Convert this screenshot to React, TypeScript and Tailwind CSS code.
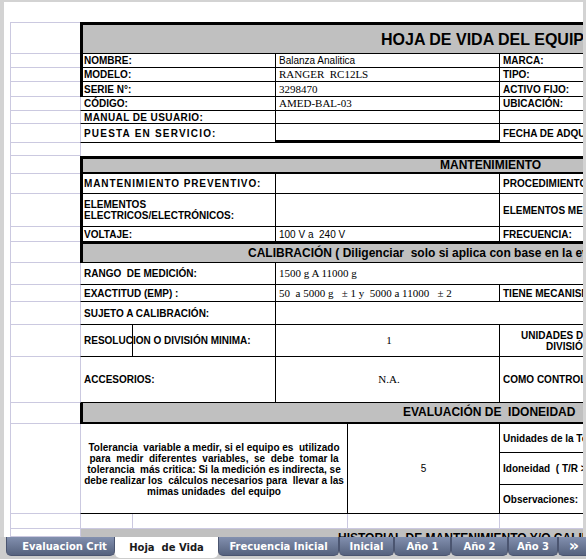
import React from 'react';

// hoja de vida del equipo, vista de hoja de cálculo

type Kids = { children?: React.ReactNode };

const Row = ({ h, top, children }: Kids & { h: string; top?: boolean }) => (
    <div className={`flex ${h}`}>
        <div className="w-[6px] shrink-0" />
        <div className={`w-[70px] shrink-0 border-b border-l border-[#cbc9e0] ${top ? 'border-t' : ''}`} />
        <div className="flex min-w-0 flex-1">{children}</div>
    </div>
);

const L = ({ thick, size, children }: Kids & { thick?: boolean; size?: string }) => (
    <div
        className={`${
            thick
                ? 'flex w-[196px] shrink-0 items-center overflow-hidden whitespace-pre border-b border-l-[3px] border-r border-black pl-[1px] font-bold'
                : 'flex w-[196px] shrink-0 items-center overflow-hidden whitespace-pre border-b border-l border-r border-black border-l-[#cbc9e0] pl-[3px] font-bold'
        } ${size ?? ''}`}
    >
        {children}
    </div>
);

const V = ({ serif, center, wide, thickBottom, children }: Kids & { serif?: boolean; center?: boolean; wide?: boolean; thickBottom?: boolean }) => (
    <div
        className={`flex shrink-0 items-center overflow-hidden whitespace-pre border-black pl-[3px] ${wide ? 'min-w-0 flex-1 border-b' : 'w-[224px] border-r'} ${thickBottom ? 'border-b-[3px]' : 'border-b'} ${center ? 'justify-center' : ''} ${serif ? "font-['Liberation_Serif',serif] text-[11px]" : ''}`}
    >
        {children}
    </div>
);

const R = ({ children }: Kids) => (
    <div className="flex min-w-0 flex-1 items-center overflow-hidden whitespace-nowrap border-b border-black pl-[3px] font-bold">
        {children}
    </div>
);

const Header = ({ top, bottom, pad, children }: Kids & { top: string; bottom: string; pad: string }) => (
    <div
        className={`flex min-w-0 flex-1 items-center overflow-hidden whitespace-pre border-l-[3px] border-black bg-[#c0c0c0] text-[12px] font-bold ${top} ${bottom} ${pad}`}
    >
        {children}
    </div>
);

const tabs = [
    { name: 'Evaluacion Crit', w: 'w-[109px] pl-[8px]', active: false },
    { name: 'Hoja  de Vida', w: 'w-[103px]', active: true },
    { name: 'Frecuencia Inicial', w: 'w-[121px]', active: false },
    { name: 'Inicial', w: 'w-[55px]', active: false },
    { name: 'Año 1', w: 'w-[57px]', active: false },
    { name: 'Año 2', w: 'w-[57px]', active: false },
    { name: 'Año 3', w: 'w-[50px]', active: false },
];

const TabBar = () => (
    <div className="flex h-[22px] shrink-0 items-start bg-[#cdcdcd] pl-[6px] font-['DejaVu_Sans',sans-serif] text-[10px] font-bold">
        {tabs.map(t => (
            <div
                key={t.name}
                className={
                    t.active
                        ? `flex h-[21px] ${t.w} shrink-0 items-center justify-center whitespace-pre rounded-b-[5px] bg-white text-[#1a1a1a]`
                        : `flex h-[19px] ${t.w} shrink-0 items-center justify-center whitespace-pre rounded-b-[5px] border border-t-0 border-[#4b5570] bg-linear-to-b from-[#8290af] to-[#56627e] text-white`
                }
            >
                {t.name}
            </div>
        ))}
        <div className="flex h-[19px] min-w-0 flex-1 items-center justify-center rounded-bl-[5px] border border-r-0 border-t-0 border-[#4b5570] bg-linear-to-b from-[#8290af] to-[#56627e] pl-[3px] text-[16px] leading-none text-white">
            »
        </div>
    </div>
);

export default function App() {
    return (
        <div className="flex h-[559px] w-[586px] flex-col overflow-hidden bg-white text-black">
            <div className="min-h-0 flex-1 overflow-hidden border-l-4 border-r-[3px] border-t-2 border-[#d3d3d3] font-['Liberation_Sans',Arial,sans-serif] text-[10px] leading-[11px]">
                <div className="h-[20px]" />

                <Row h="h-[32px]" top>
                    <div className="flex min-w-0 flex-1 items-center overflow-hidden whitespace-nowrap border-b border-l-[3px] border-t-[3px] border-black bg-[#c0c0c0] pl-[298px] text-[16px] font-bold">
                        HOJA DE VIDA DEL EQUIPO
                    </div>
                </Row>
                <Row h="h-[14px]">
                    <L thick>NOMBRE:</L>
                    <V>Balanza Analitica</V>
                    <R>MARCA:</R>
                </Row>
                <Row h="h-[14px]">
                    <L thick>MODELO:</L>
                    <V serif>RANGER  RC12LS</V>
                    <R>TIPO:</R>
                </Row>
                <Row h="h-[15px]">
                    <L thick>SERIE N°:</L>
                    <V serif>3298470</V>
                    <R>ACTIVO FIJO:</R>
                </Row>
                <Row h="h-[14px]">
                    <L>CÓDIGO:</L>
                    <V serif>AMED-BAL-03</V>
                    <R>UBICACIÓN:</R>
                </Row>
                <Row h="h-[13px]">
                    <L size="tracking-[0.4px]">MANUAL DE USUARIO:</L>
                    <V />
                    <R />
                </Row>
                <Row h="h-[19px]">
                    <L size="tracking-[1.2px]">PUESTA EN SERVICIO:</L>
                    <V thickBottom />
                    <R>FECHA DE ADQUISICIÓN:</R>
                </Row>
                <Row h="h-[13px]">
                    <div className="flex-1 border-l border-[#cbc9e0]" />
                </Row>

                <Row h="h-[18px]">
                    <Header top="border-t-[3px]" bottom="border-b-2" pad="pl-[357px]">
                        MANTENIMIENTO
                    </Header>
                </Row>
                <Row h="h-[20px]">
                    <L thick size="tracking-[0.9px]">MANTENIMIENTO PREVENTIVO:</L>
                    <V />
                    <R>PROCEDIMIENTO DE MANTENIMIENTO:</R>
                </Row>
                <Row h="h-[33px]">
                    <L thick>
                        <span>
                            ELEMENTOS
                            <br />
                            ELECTRICOS/ELECTRÓNICOS:
                        </span>
                    </L>
                    <V />
                    <R>ELEMENTOS MECÁNICOS:</R>
                </Row>
                <Row h="h-[15px]">
                    <L thick>VOLTAJE:</L>
                    <V>100 V a  240 V</V>
                    <R>FRECUENCIA:</R>
                </Row>
                <Row h="h-[21px]">
                    <Header top="border-t-2" bottom="border-b" pad="pl-[165px]">
                        CALIBRACIÓN ( Diligenciar  solo si aplica con base en la evaluación de idoneidad )
                    </Header>
                </Row>
                <Row h="h-[22px]">
                    <L>RANGO  DE MEDICIÓN:</L>
                    <V serif wide>1500 g A 11000 g</V>
                </Row>
                <Row h="h-[17px]">
                    <L>EXACTITUD (EMP) :</L>
                    <V serif>50  a 5000 g   ± 1 y  5000 a 11000   ± 2</V>
                    <R>TIENE MECANISMO DE AJUSTE:</R>
                </Row>
                <Row h="h-[23px]">
                    <L>SUJETO A CALIBRACIÓN:</L>
                    <V wide />
                </Row>
                <Row h="h-[32px]">
                    <div className="flex w-[53px] shrink-0 items-center whitespace-nowrap border-b border-l border-r border-black border-l-[#cbc9e0] pl-[3px] font-bold">
                        RESOLUCION O DIVISIÓN MINIMA:
                    </div>
                    <div className="w-[143px] shrink-0 border-b border-r border-black" />
                    <V serif center>1</V>
                    <div className="flex min-w-0 flex-1 flex-col justify-center overflow-hidden whitespace-nowrap border-b border-black font-bold">
                        <div className="pl-[21px]">UNIDADES DE LA</div>
                        <div className="pl-[46px]">DIVISIÓN</div>
                    </div>
                </Row>
                <Row h="h-[46px]">
                    <L>ACCESORIOS:</L>
                    <V serif center>N.A.</V>
                    <R>COMO CONTROLA LA CALIBRACIÓN:</R>
                </Row>
                <Row h="h-[21px]">
                    <Header top="border-t-0" bottom="border-b-2" pad="pl-[320px]">
                        EVALUACIÓN DE  IDONEIDAD
                    </Header>
                </Row>

                <Row h="h-[90px]">
                    <div className="flex w-[268px] shrink-0 flex-col items-center justify-center whitespace-pre border-b border-l border-r border-black border-l-[#cbc9e0] pt-[1px] text-center font-bold">
                        <div>Tolerancia  variable a medir, si el equipo es  utilizado</div>
                        <div>para  medir  diferentes  variables,  se  debe  tomar la</div>
                        <div>tolerancia  más critica: Si la medición es indirecta, se</div>
                        <div>debe realizar los  cálculos necesarios para  llevar a las</div>
                        <div>mimas unidades  del equipo</div>
                    </div>
                    <div className="flex w-[152px] shrink-0 items-center justify-center border-b border-r border-black">5</div>
                    <div className="flex min-w-0 flex-1 flex-col overflow-hidden whitespace-nowrap border-b border-black font-bold">
                        <div className="flex h-[29px] shrink-0 items-center border-b border-black pl-[3px]">Unidades de la Tolerancia:</div>
                        <div className="flex h-[32px] shrink-0 items-center whitespace-pre border-b border-black pl-[3px]">Idoneidad  ( T/R &gt;= 4 ):</div>
                        <div className="flex flex-1 items-center pl-[3px]">Observaciones:</div>
                    </div>
                </Row>
                <Row h="h-[15px]">
                    <div className="w-[53px] shrink-0 border-b border-l border-r border-[#cbc9e0]" />
                    <div className="w-[215px] shrink-0 border-b border-r border-[#cbc9e0]" />
                    <div className="w-[152px] shrink-0 border-b border-r border-[#cbc9e0]" />
                    <div className="min-w-0 flex-1 border-b border-[#cbc9e0]" />
                </Row>
                <Row h="h-[8px]">
                    <div className="h-[8px] min-w-0 flex-1 overflow-hidden whitespace-nowrap border-l border-[#cbc9e0] bg-[#c0c0c0] pl-[257px] pt-[2px] text-[12px] leading-[14px] font-bold">
                        HISTORIAL DE MANTENIMIENTO Y/O CALIBRACIÓN
                    </div>
                </Row>
            </div>
            <TabBar />
        </div>
    );
}
